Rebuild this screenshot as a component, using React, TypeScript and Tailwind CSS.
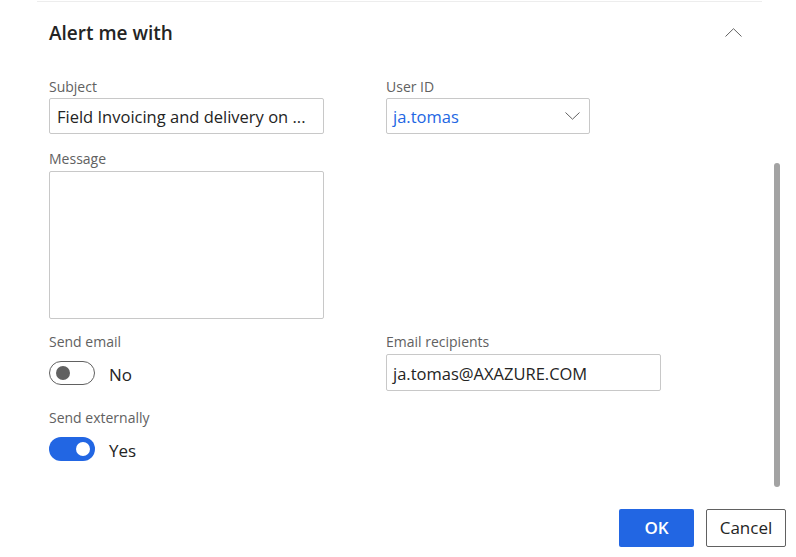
type ToggleProps = {
  on: boolean;
  label: string;
};

function Toggle({ on, label }: ToggleProps) {
  return (
    <div className="flex items-center">
      {on ? (
        <div className="flex h-[24px] w-[46px] items-center justify-end rounded-full bg-[#2266e3] pr-[5px]">
          <span className="h-[14px] w-[14px] rounded-full bg-white" />
        </div>
      ) : (
        <div className="flex h-[24px] w-[46px] items-center rounded-full border border-[#616161] bg-white pl-[6px]">
          <span className="h-[14px] w-[14px] rounded-full bg-[#616161]" />
        </div>
      )}
      <span className="ml-[14px] pt-[3px] text-[17px] text-[#242424]">{label}</span>
    </div>
  );
}

function Label({ children }: { children: string }) {
  return <p className="h-[20px] text-[14px] leading-[20px] text-[#616161]">{children}</p>;
}

export default function App() {
  return (
    <div
      className="relative h-[557px] w-[796px] overflow-hidden bg-white"
      style={{ fontFamily: '"Open Sans", "Noto Sans", sans-serif' }}
    >
      <div className="ml-[37px] mt-px h-px w-[725px] bg-[#ededed]" />

      <div className="relative h-[497px] pl-[49px] pt-[19px]">
        <div className="flex h-[24px] items-center justify-between pr-[54px]">
          <h2 className="text-[19px] font-semibold leading-[24px] text-[#242424]">Alert me with</h2>
          <svg width="17" height="9" viewBox="0 0 17 9" fill="none" className="mt-[-2px]">
            <path d="M0.5 8.5 L8.5 0.7 L16.5 8.5" stroke="#616161" strokeWidth="1" />
          </svg>
        </div>

        <div className="mt-[32px] grid grid-cols-[337px_1fr]">
          <div>
            <Label>Subject</Label>
            <div className="mt-px flex h-[36px] w-[275px] items-center rounded-[2px] border border-[#c8c8c8] px-[7px] pt-[3px] text-[16.5px] text-[#242424]">
              Field Invoicing and delivery on ...
            </div>
          </div>
          <div>
            <Label>User ID</Label>
            <div className="mt-px flex h-[36px] w-[204px] items-center justify-between rounded-[2px] border border-[#c8c8c8] pl-[6px] pr-[9px] text-[16.5px] text-[#2266e3]">
              <span className="pt-[3px]">ja.tomas</span>
              <svg width="15" height="8" viewBox="0 0 15 8" fill="none">
                <path d="M0.5 0.5 L7.5 7.2 L14.5 0.5" stroke="#616161" strokeWidth="1" />
              </svg>
            </div>
          </div>
        </div>

        <div className="mt-[15px]">
          <Label>Message</Label>
          <div className="mt-[2px] h-[148px] w-[275px] rounded-[2px] border border-[#c8c8c8]" />
        </div>

        <div className="mt-[13px] grid grid-cols-[337px_1fr]">
          <div>
            <Label>Send email</Label>
            <div className="mt-[7px]">
              <Toggle on={false} label="No" />
            </div>
          </div>
          <div>
            <Label>Email recipients</Label>
            <div className="mt-[2px] flex h-[37px] w-[275px] items-center rounded-[2px] border border-[#c8c8c8] px-[6px] pt-[3px] text-[16.5px] text-[#242424]">
              ja.tomas@AXAZURE.COM
            </div>
          </div>
        </div>

        <div className="mt-[17px]">
          <Label>Send externally</Label>
          <div className="mt-[7px]">
            <Toggle on={true} label="Yes" />
          </div>
        </div>

        <div className="absolute left-[774px] top-[161px] h-[324px] w-[6px] rounded-full bg-[#a3a3a3]" />
      </div>

      <div className="flex justify-end gap-[12px] pr-[10px] pt-[10px]">
        <button
          type="button"
          className="h-[38px] w-[75px] rounded-[2px] bg-[#2266e3] text-[17px] font-semibold text-white"
        >
          OK
        </button>
        <button
          type="button"
          className="h-[38px] w-[80px] rounded-[2px] border border-[#616161] bg-white text-[17px] text-[#242424]"
        >
          Cancel
        </button>
      </div>
    </div>
  );
}
